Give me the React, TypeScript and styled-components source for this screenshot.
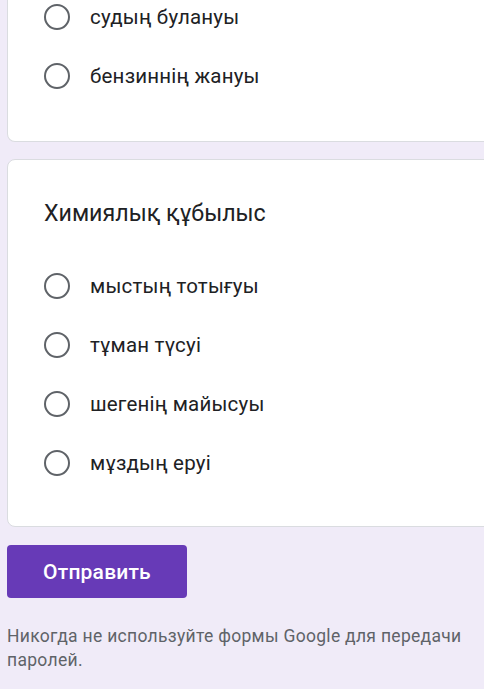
import styled, { createGlobalStyle } from 'styled-components';

const GlobalStyle = createGlobalStyle`
	html, body {
		margin: 0;
		padding: 0;
		background: #f0ebf8;
		font-family: Roboto, "Noto Sans", Arial, sans-serif;
	}
`;

type Question = {
	title?: string;
	options: string[];
};

const questions: Question[] = [
	{ options: ['судың булануы', 'бензиннің жануы'] },
	{ title: 'Химиялық құбылыс', options: ['мыстың тотығуы', 'тұман түсуі', 'шегенің майысуы', 'мұздың еруі'] },
];

export default function App() {
	return (
		<>
			<GlobalStyle />
			<Page>
				{questions.map((q, i) => (
					<Card key={i} $cut={!q.title}>
						{q.title && <Title>{q.title}</Title>}
						<OptionList>
							{q.options.map((o) => (
								<Option key={o}>
									<Radio />
									<span>{o}</span>
								</Option>
							))}
						</OptionList>
					</Card>
				))}
				<SubmitButton>Отправить</SubmitButton>
				<Footer>Никогда не используйте формы Google для передачи паролей.</Footer>
			</Page>
		</>
	);
}

const Page = styled.div`
	padding-left: 7px;
	height: 689px;
	overflow: hidden;
	display: flex;
	flex-direction: column;
	align-items: flex-start;
`;

const Card = styled.div<{ $cut: boolean }>`
	box-sizing: border-box;
	align-self: stretch;
	margin-right: -12px;
	background: #fff;
	border: 1px solid #dadce0;
	border-radius: 8px;
	padding: 38px 36px 50px;

	& + & {
		margin-top: 17px;
	}

	${(p) =>
		p.$cut &&
		`
		border-top: none;
		border-top-left-radius: 0;
		border-top-right-radius: 0;
		padding-top: 4px;
		padding-bottom: 52px;
	`}
`;

const Title = styled.div`
	font-size: 23.2px;
	line-height: 30px;
	color: #202124;
	margin-bottom: 45px;
`;

const OptionList = styled.div`
	display: flex;
	flex-direction: column;
	gap: 33px;
`;

const Option = styled.div`
	display: flex;
	align-items: center;
	gap: 20px;
	height: 26px;
	font-size: 20.5px;
	color: #202124;
	letter-spacing: 0.2px;
`;

const Radio = styled.div`
	box-sizing: border-box;
	width: 26px;
	height: 26px;
	border: 2.5px solid #5f6368;
	border-radius: 50%;
	flex-shrink: 0;
`;

const SubmitButton = styled.button`
	margin-top: 18px;
	width: 180px;
	height: 53px;
	padding: 0;
	border: none;
	border-radius: 4px;
	background: #673ab7;
	color: #fff;
	font-family: Roboto, "Noto Sans", Arial, sans-serif;
	font-size: 21px;
	font-weight: 500;
	letter-spacing: 0.2px;
`;

const Footer = styled.div`
	margin-top: 26px;
	padding-right: 8px;
	font-size: 17.5px;
	line-height: 24px;
	color: #5f6368;
	letter-spacing: 0.3px;
`;
